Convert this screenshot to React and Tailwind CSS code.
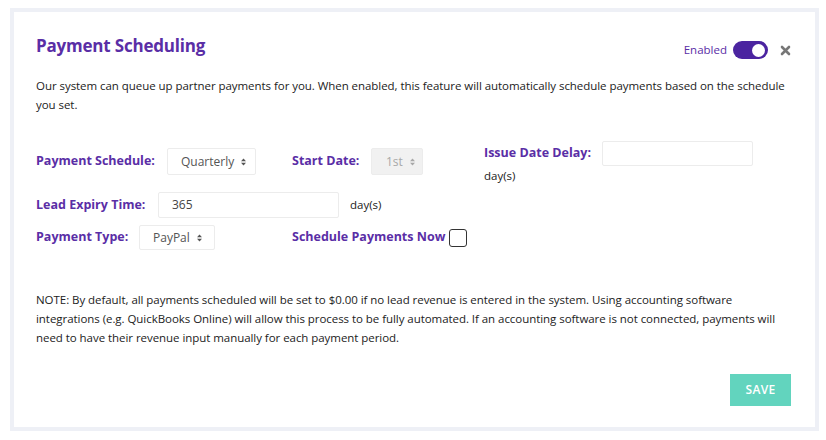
function Select({ value, disabled, className = "" }) {
  return (
    <div
      className={`flex items-center h-full border border-[#ececec] rounded-[2px] text-[12px] ${
        disabled ? "bg-[#f1f1f1] text-[#a8a8a8]" : "bg-white text-[#555]"
      } ${className}`}
    >
      <span>{value}</span>
      <svg width="7" height="10" viewBox="0 0 7 10" className="ml-[6px]" fill="currentColor">
        <path d="M3.5 1.5 L6 4.2 H1 Z" />
        <path d="M3.5 8.5 L6 5.8 H1 Z" />
      </svg>
    </div>
  )
}

export default function App() {
  return (
    <div className="w-[826px] h-[440px] bg-white pt-[8px] pl-[10px]" style={{ fontFamily: '"Open Sans", sans-serif' }}>
      <div className="w-[809px] h-[423px] border-4 border-[#eef0f6] bg-white pl-[22px] pr-[24px] pt-[22px] flex flex-col">
        <div className="flex items-center justify-between h-[24px]">
          <h2 className="text-[17px] font-bold text-[#5a2ea6] tracking-[-0.2px]">Payment Scheduling</h2>
          <div className="flex items-center mt-[8px]">
            <span className="text-[11.5px] text-[#5a2ea6] mr-[6px]">Enabled</span>
            <div className="w-[35px] h-[18px] rounded-full bg-[#4b24a0] flex items-center justify-end pr-[3px]">
              <div className="w-[13px] h-[13px] rounded-full bg-white" />
            </div>
            <svg width="11" height="11" viewBox="0 0 11 11" className="ml-[12px]">
              <path d="M2 2 L9 9 M9 2 L2 9" stroke="#777" strokeWidth="2.6" strokeLinecap="round" />
            </svg>
          </div>
        </div>

        <p className="text-[11.5px] leading-[19px] text-[#222] mt-[18px] tracking-[-0.05px]">
          Our system can queue up partner payments for you. When enabled, this feature will automatically schedule payments based on the schedule you set.
        </p>

        <div className="flex items-start mt-[27px] h-[43px]">
          <div className="w-[256px] flex items-center h-[27px] mt-[7px]">
            <span className="text-[12.5px] font-bold text-[#5a2ea6] w-[131px]">Payment Schedule:</span>
            <Select value="Quarterly" className="w-[89px] pl-[13px]" />
          </div>
          <div className="w-[192px] flex items-center h-[27px] mt-[7px]">
            <span className="text-[12.5px] font-bold text-[#5a2ea6] w-[79px]">Start Date:</span>
            <Select value="1st" disabled className="w-[52px] pl-[14px]" />
          </div>
          <div className="flex flex-col">
            <div className="flex items-center h-[25px]">
              <span className="text-[12.5px] font-bold text-[#5a2ea6] w-[118px]">Issue Date Delay:</span>
              <div className="w-[151px] h-full border border-[#ececec] rounded-[2px] bg-white" />
            </div>
            <span className="text-[11.5px] text-[#222] leading-[16px] mt-[2px]">day(s)</span>
          </div>
        </div>

        <div className="flex items-center mt-[8px] h-[26px]">
          <span className="text-[12.5px] font-bold text-[#5a2ea6] w-[122px]">Lead Expiry Time:</span>
          <div className="w-[181px] h-full border border-[#ececec] rounded-[2px] bg-white flex items-center pl-[13px] text-[12px] text-[#444]">
            365
          </div>
          <span className="text-[11.5px] text-[#222] ml-[11px]">day(s)</span>
        </div>

        <div className="flex items-center mt-[7px] h-[25px]">
          <div className="w-[256px] flex items-center h-full">
            <span className="text-[12.5px] font-bold text-[#5a2ea6] w-[103px]">Payment Type:</span>
            <Select value="PayPal" className="w-[76px] pl-[13px]" />
          </div>
          <span className="text-[12.5px] font-bold text-[#5a2ea6]">Schedule Payments Now</span>
          <div className="w-[18px] h-[18px] border-[1.5px] border-[#333] rounded-[3px] ml-[4px]" />
        </div>

        <p className="text-[11.5px] leading-[19px] text-[#222] mt-[40px] tracking-[-0.05px]">
          NOTE: By default, all payments scheduled will be set to $0.00 if no lead revenue is entered in the system. Using accounting software integrations (e.g. QuickBooks Online) will allow this process to be fully automated. If an accounting software is not connected, payments will need to have their revenue input manually for each payment period.
        </p>

        <div className="flex justify-end mt-[27px]">
          <button className="w-[61px] h-[32px] bg-[#62d4be] text-white text-[12px] font-semibold tracking-[0.3px]">
            SAVE
          </button>
        </div>
      </div>
    </div>
  )
}
